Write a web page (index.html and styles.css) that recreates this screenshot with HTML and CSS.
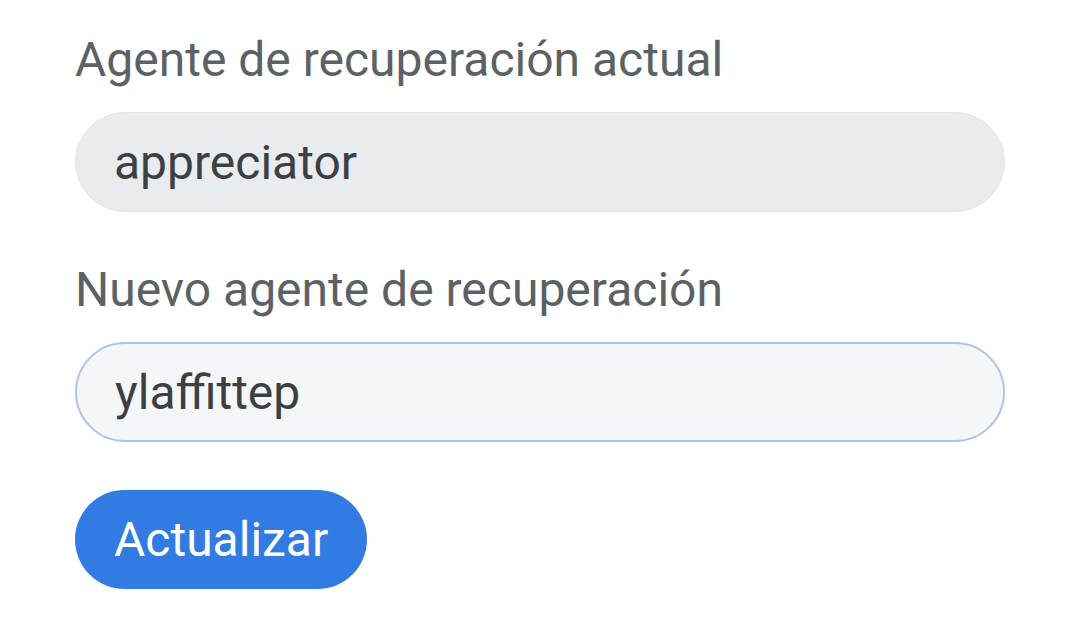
FILE: index.html
```html
<!DOCTYPE html>
<html lang="es">
<head>
    <meta charset="UTF-8">
    <meta name="viewport" content="width=device-width, initial-scale=1.0">
    <title>Agente de recuperación</title>
    <link rel="stylesheet" href="styles.css">
</head>
<body>
    <div class="container">
        <div class="form-group">
            <label for="current-agent">Agente de recuperación actual</label>
            <input type="text" id="current-agent" class="field field-readonly" value="appreciator" readonly>
        </div>
        <div class="form-group">
            <label for="new-agent">Nuevo agente de recuperación</label>
            <input type="text" id="new-agent" class="field field-active" value="ylaffittep">
        </div>
        <button class="btn">Actualizar</button>
    </div>
</body>
</html>
```

FILE: styles.css
```css
body {
    font-family: Roboto, "Noto Sans", sans-serif;
    margin: 0;
    padding: 0;
    background-color: #fff;
}

.container {
    padding: 30px 75px;
}

.form-group {
    margin-bottom: 48px;
}

.form-group label {
    display: block;
    font-size: 48px;
    line-height: 60px;
    color: #5c6166;
    margin-bottom: 22px;
}

.field {
    display: block;
    width: 100%;
    height: 100px;
    padding: 0 38px;
    font-family: inherit;
    font-size: 48px;
    color: #3c4043;
    border-radius: 50px;
    box-sizing: border-box;
    outline: none;
}

.field-readonly {
    background-color: #e9ecef;
    border: 1px solid #e2e5e8;
}

.field-active {
    background-color: #f5f6f7;
    border: 2px solid #a9c6ee;
}

.btn {
    display: block;
    height: 99px;
    padding: 0 39px;
    font-family: inherit;
    font-size: 48px;
    color: #fff;
    background-color: #317be2;
    border: none;
    border-radius: 50px;
    cursor: pointer;
}
```
